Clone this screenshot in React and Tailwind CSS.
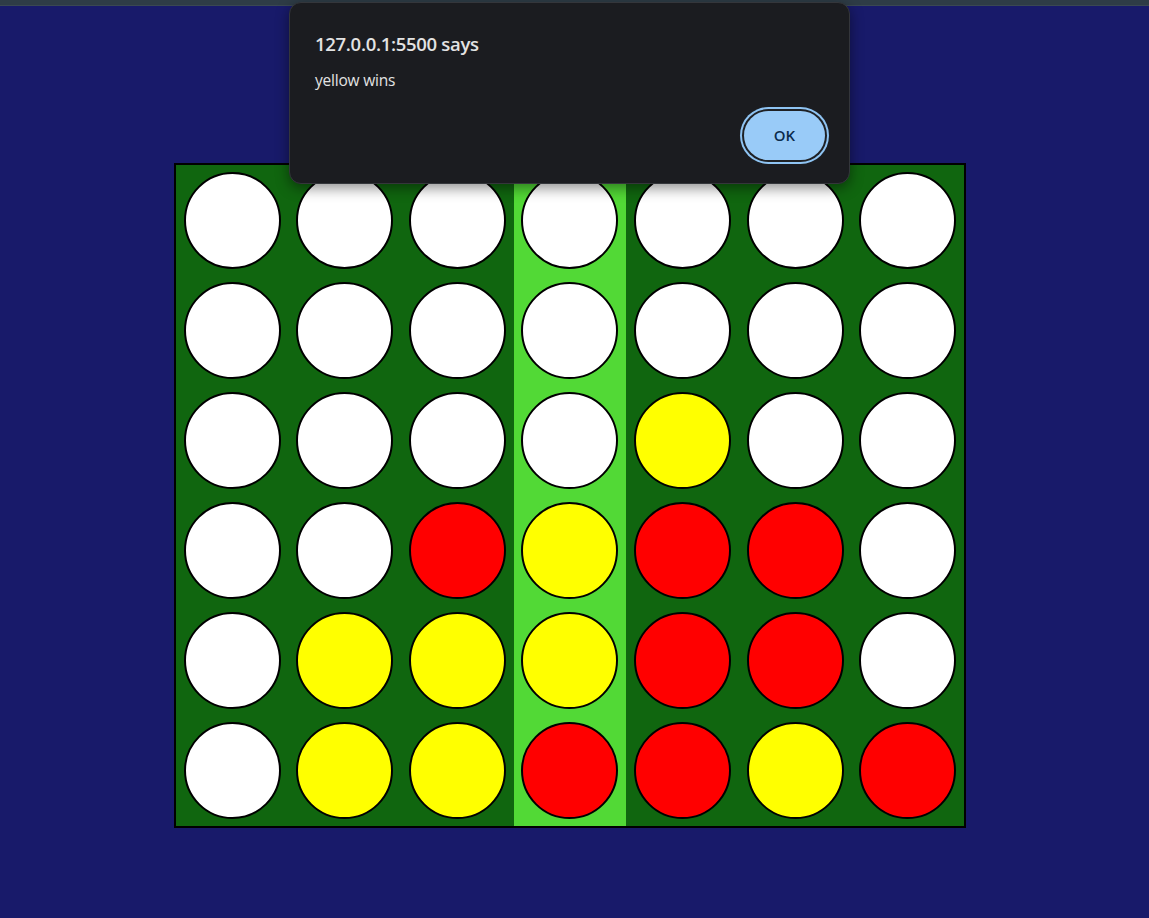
import React from 'react';

const W = 'w', Y = 'y', R = 'r';

const rows = [
  [W, W, W, W, W, W, W],
  [W, W, W, W, W, W, W],
  [W, W, W, W, Y, W, W],
  [W, W, R, Y, R, R, W],
  [W, Y, Y, Y, R, R, W],
  [W, Y, Y, R, R, Y, R],
];

const discColor = {
  w: 'bg-white',
  y: 'bg-[#ffff00]',
  r: 'bg-[#ff0000]',
};

function Board() {
  const highlighted = 3;
  return (
    <div className="ml-[174px] mt-[157px] w-[792px] h-[665px] border-2 border-black bg-[#10660f] grid grid-cols-7">
      {[0, 1, 2, 3, 4, 5, 6].map((col) => (
        <div
          key={col}
          className={`flex flex-col ${col === highlighted ? 'bg-[#52d936]' : ''}`}
        >
          {rows.map((row, r) => (
            <div key={r} className="flex-1 flex items-center justify-center">
              <div className={`w-[97px] h-[97px] rounded-full border-2 border-black ${discColor[row[col]]}`} />
            </div>
          ))}
        </div>
      ))}
    </div>
  );
}

function AlertDialog() {
  return (
    <div
      className="absolute left-[289px] top-[2px] w-[561px] h-[182px] rounded-[12px] bg-[#1b1c20] border border-[#34363b] shadow-[0_4px_14px_rgba(0,0,0,0.45)] pl-[25px] pr-6 pt-[27px] flex flex-col"
      style={{ fontFamily: '"Open Sans", "Noto Sans", sans-serif' }}
    >
      <div className="text-[18.5px] font-semibold text-[#e3e3e3] leading-[28px] tracking-[-0.3px]">127.0.0.1:5500 says</div>
      <div className="mt-[12px] text-[15.5px] text-[#e3e3e3] leading-[20px] tracking-[-0.2px]">yellow wins</div>
      <div className="flex justify-end mt-[21px]">
        <button className="w-[81px] h-[49px] rounded-full bg-[#99cbf8] text-[#0b2b4c] text-[15px] font-semibold shadow-[0_0_0_2px_#1f2125,0_0_0_4px_#8fc4f3]">
          OK
        </button>
      </div>
    </div>
  );
}

export default function App() {
  return (
    <div className="relative min-h-screen bg-[#181a6a] overflow-hidden">
      <div className="h-[6px] bg-[#2e3c46] border-b border-[#3a4852]" />
      <Board />
      <AlertDialog />
    </div>
  );
}
